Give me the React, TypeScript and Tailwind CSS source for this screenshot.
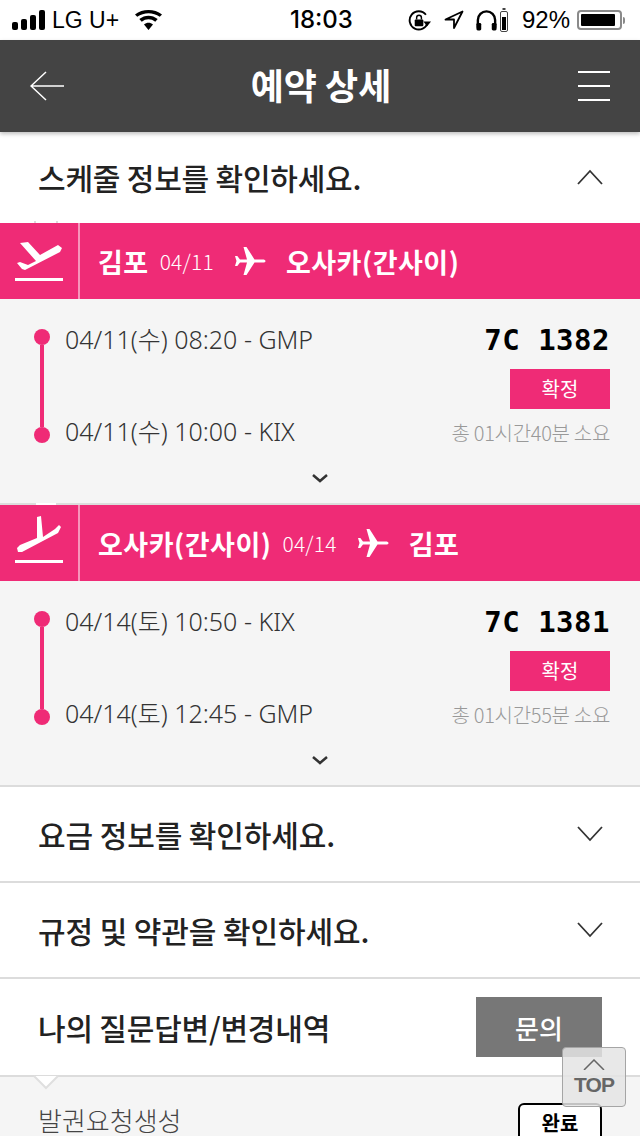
const KR = { fontFamily: '"Noto Sans CJK KR", "Noto Sans", sans-serif' };
const LATIN = { fontFamily: '"Noto Sans", "Noto Sans CJK KR", sans-serif' };

function Plane({ className }: { className?: string }) {
	return (
		<svg viewBox="0 0 32 30" className={className} fill="currentColor">
			<path d="M31.500 15c0-.9-1-1.600-3-1.600h-8L12.500 1H9.500l3.500 12.400H6L3.300 10H1l1.500 5L1 20h2.300L6 16.600h7L9.500 29h3l8-12.400h8c2 0 3-.7 3-1.600z" />
		</svg>
	);
}

function Departure() {
	return (
		<svg viewBox="0 0 50 42" className="h-[42px] w-[50px] text-white" fill="currentColor">
			<path d="M5 3L13 2 25 15 43 5 47 8 45 12 10 30 7 29 2 23 5 22 13 25 21 21z" strokeLinejoin="round" />
			<rect x="0" y="38" width="48" height="3" />
		</svg>
	);
}

function Arrival() {
	return (
		<svg viewBox="0 0 50 54" className="h-[54px] w-[50px] text-white" fill="currentColor">
			<path d="M22 1L26 0 28 21 40 13 44 9 46 11 43 17 7 36 3 36 2 32 5 29 22 22z" />
			<rect x="0" y="44" width="48" height="3" />
		</svg>
	);
}

function Chevron({ up }: { up?: boolean }) {
	return (
		<svg viewBox="0 0 26 16" className="h-[16px] w-[26px]" fill="none" stroke="#333" strokeWidth="1.800">
			<path d={up ? "M1 15L13 2l12 13" : "M1 1l12 13L25 1"} />
		</svg>
	);
}

function SectionRow({ title }: { title: string }) {
	return (
		<div className="flex h-[96px] items-center justify-between border-b-2 border-[#dcdcdc] bg-white pr-[37px] pl-[38px]">
			<h2 className="text-[30px] leading-none font-medium tracking-[-0.1px] text-[#222]">{title}</h2>
			<Chevron />
		</div>
	);
}

type Flight = {
	icon: React.ReactNode;
	from: string;
	to: string;
	date: string;
	dep: string;
	arr: string;
	no: string;
	total: string;
};

function FlightCard({ flight }: { flight: Flight }) {
	return (
		<section>
			<div className="flex h-[76px] items-center bg-[#ef2b76] text-white">
				<div className="flex h-full w-[80px] items-center border-r-2 border-[#f795bb] pl-[15px]">
					{flight.icon}
				</div>
				<div className="flex items-center pl-[18px]">
					<span className="text-[27px] leading-none font-bold tracking-[0.5px]">{flight.from}</span>
					<span className="ml-[11px] text-[21px] leading-none font-light tracking-[0.2px]">{flight.date}</span>
					<Plane className="mx-[20px] h-[30px] w-[32px]" />
					<span className="text-[27px] leading-none font-bold tracking-[0.5px]">{flight.to}</span>
				</div>
			</div>
			<div className="relative flex h-[204px] justify-between bg-[#f5f5f5] pt-[26px] pr-[30px] pl-[34px]">
				<div className="flex">
					<div className="flex h-[114px] w-[16px] flex-col items-center pt-[4px]">
						<span className="h-[16px] w-[16px] shrink-0 rounded-full bg-[#ef2b76]" />
						<span className="h-[82px] w-[4px] shrink-0 bg-[#ef2b76]" />
						<span className="h-[16px] w-[16px] shrink-0 rounded-full bg-[#ef2b76]" />
					</div>
					<div className="ml-[15px] flex h-[120px] flex-col justify-between text-[25px] leading-[28px] font-light text-[#333]" style={LATIN}>
						<p>{flight.dep}</p>
						<p>{flight.arr}</p>
					</div>
				</div>
				<div className="flex flex-col items-end">
					<p className="font-['DejaVu_Sans_Mono',monospace] text-[29px] leading-[30px] font-bold tracking-[0.5px] text-black">
						{flight.no}
					</p>
					<span className="mt-[14px] flex h-[40px] w-[100px] items-center justify-center bg-[#ef2b76] text-[20px] text-white">
						확정
					</span>
					<p className="mt-[11px] text-[20px] leading-[26px] font-light tracking-[-0.3px] text-[#999]">{flight.total}</p>
				</div>
				<svg viewBox="0 0 16 9" className="absolute top-[175px] left-[312px] h-[9px] w-[16px]" fill="none" stroke="#333" strokeWidth="2.500">
					<path d="M1 1l7 6 7-6" />
				</svg>
			</div>
			<div className="h-[2px] bg-[#dcdcdc]" />
		</section>
	);
}

const flights: Flight[] = [
	{
		icon: <Departure />,
		from: "김포",
		to: "오사카(간사이)",
		date: "04/11",
		dep: "04/11(수) 08:20 - GMP",
		arr: "04/11(수) 10:00 - KIX",
		no: "7C 1382",
		total: "총 01시간40분 소요",
	},
	{
		icon: <Arrival />,
		from: "오사카(간사이)",
		to: "김포",
		date: "04/14",
		dep: "04/14(토) 10:50 - KIX",
		arr: "04/14(토) 12:45 - GMP",
		no: "7C 1381",
		total: "총 01시간55분 소요",
	},
];

export default function App() {
	return (
		<div className="relative h-[1136px] w-[640px] overflow-hidden bg-white" style={KR}>
			<div className="flex h-[40px] items-center justify-between pr-[15px] pl-[12px] text-[24px] font-normal text-black">
				<div className="flex items-center">
					<div className="flex items-end gap-[3px]">
						<span className="h-[8px] w-[6px] rounded-[2px] bg-black" />
						<span className="h-[11px] w-[6px] rounded-[2px] bg-black" />
						<span className="h-[15px] w-[6px] rounded-[2px] bg-black" />
						<span className="h-[20px] w-[6px] rounded-[2px] bg-black" />
					</div>
					<span className="ml-[7px] font-['Liberation_Sans',sans-serif] text-[23px]">LG U+</span>
					<svg viewBox="0 0 30 22" className="ml-[16px] h-[20px] w-[27px]" fill="black">
						<path d="M15 22l-5-6c3-2.500 7-2.500 10 0zM7.500 13L4.800 10c6-5 14.400-5 20.400 0l-2.700 3c-4.500-3.700-10.500-3.700-15 0zM2.500 7.500L0 4.800c8.500-6.400 21.500-6.400 30 0l-2.500 2.700C20 2 10 2 2.500 7.500z" />
					</svg>
				</div>
				<span className="absolute left-[290px] font-['Inter',sans-serif] text-[24px] font-medium">18:03</span>
				<div className="flex items-center">
					<svg viewBox="0 0 24 24" className="h-[23px] w-[23px]" fill="none" stroke="black" strokeWidth="2">
						<path d="M20.500 14a9.500 9.500 0 1 1-1.800-8" />
						<path d="M16 13h8l-4 5z" fill="black" stroke="none" />
						<rect x="7" y="11" width="9" height="7" rx="1" fill="black" stroke="none" />
						<path d="M9 11V9a2.500 2.500 0 0 1 5 0v2" strokeWidth="1.500" />
					</svg>
					<svg viewBox="0 0 20 20" className="ml-[13px] h-[20px] w-[20px]" fill="none" stroke="black" strokeWidth="1.800">
						<path d="M18.500 1.500L1.500 9.500h8.500v8.500z" strokeLinejoin="round" />
					</svg>
					<svg viewBox="0 0 24 24" className="ml-[11px] h-[24px] w-[23px]" fill="none" stroke="black" strokeWidth="2.500">
						<path d="M3 20v-8a9 9 0 0 1 18 0v8" />
						<rect x="1.500" y="15" width="5" height="8" rx="1.500" fill="black" stroke="none" />
						<rect x="17.500" y="15" width="5" height="8" rx="1.500" fill="black" stroke="none" />
					</svg>
					<svg viewBox="0 0 8 24" className="ml-[2px] h-[24px] w-[8px]">
						<rect x="2.500" y="0" width="3" height="2" fill="#444" />
						<rect x="0.500" y="3.500" width="7" height="20" rx="1.500" fill="none" stroke="#444" />
						<rect x="2" y="9" width="4" height="13" fill="black" />
					</svg>
					<span className="ml-[14px] font-['Liberation_Sans',sans-serif] text-[24px]">92%</span>
					<div className="ml-[7px] flex items-center">
						<div className="h-[20px] w-[45px] rounded-[4px] border-2 border-[#8a8a8a] p-[2px]">
							<div className="h-full w-[92%] rounded-[1px] bg-black" />
						</div>
						<span className="ml-[1px] h-[7px] w-[2px] rounded-r-full bg-[#8a8a8a]" />
					</div>
				</div>
			</div>

			<header className="relative z-10 flex h-[92px] items-center justify-between bg-[#444444] pr-[30px] pl-[30px] shadow-[0_2px_4px_rgba(0,0,0,0.25)]">
				<svg viewBox="0 0 34 30" className="h-[30px] w-[34px]" fill="none" stroke="white" strokeWidth="1.500">
					<path d="M16 1L1 15l15 14M1 15h33" />
				</svg>
				<h1 className="mb-[4px] text-[36px] leading-none font-bold text-white">예약 상세</h1>
				<div className="flex h-[30px] w-[32px] flex-col justify-between">
					<span className="h-[2px] bg-white" />
					<span className="h-[2px] bg-white" />
					<span className="h-[2px] bg-white" />
				</div>
			</header>

			<div className="relative flex h-[91px] items-center justify-between bg-white pr-[37px] pb-[2px] pl-[38px]">
				<h2 className="text-[30px] leading-none font-medium tracking-[-0.2px] text-[#222]">스케줄 정보를 확인하세요.</h2>
				<Chevron up />
				<span className="absolute bottom-0 left-[34px] h-[2px] w-[2px] bg-[#dcdcdc]" />
				<span className="absolute bottom-0 left-[56px] h-[2px] w-[2px] bg-[#dcdcdc]" />
			</div>

			<div className="relative">
				<FlightCard flight={flights[0]} />
				<span className="absolute top-[280px] left-[36px] h-[2px] w-[20px] bg-white" />
				<FlightCard flight={flights[1]} />
			</div>

			<SectionRow title="요금 정보를 확인하세요." />
			<SectionRow title="규정 및 약관을 확인하세요." />

			<div className="flex h-[98px] items-center justify-between border-b-2 border-[#dcdcdc] bg-white pr-[38px] pl-[38px]">
				<h2 className="text-[30px] leading-none font-medium tracking-[-0.2px] text-[#222]">나의 질문답변/변경내역</h2>
				<button className="flex h-[60px] w-[126px] items-center justify-center bg-[#777777] text-[26px] font-medium text-white">
					문의
				</button>
			</div>

			<div className="relative flex items-start justify-between bg-[#f5f5f5] pt-[26px] pr-[38px] pl-[38px]">
				<svg viewBox="0 0 26 15" className="absolute top-[-2px] left-[33px] h-[15px] w-[26px]" fill="white" stroke="#dfdfdf" strokeWidth="2">
					<path d="M1 1l12 12L25 1" />
				</svg>
				<p className="mt-[-1px] text-[26px] leading-[36px] font-light text-[#444]">발권요청생성</p>
				<span className="flex h-[40px] w-[84px] items-center justify-center rounded-[6px] border-2 border-black bg-white text-[20px] font-bold text-black">
					완료
				</span>
			</div>

			<div className="absolute top-[1047px] left-[562px] flex h-[60px] w-[64px] flex-col items-center rounded-[4px] border border-[#a5a5a5] bg-[#e4e4e4]/85 pt-[11px]">
				<svg viewBox="0 0 22 11" className="h-[11px] w-[22px]" fill="none" stroke="#666" strokeWidth="1.500">
					<path d="M1 11L11 1l10 10" />
				</svg>
				<span className="mt-[3px] font-['Liberation_Sans',sans-serif] text-[21px] leading-[24px] font-bold tracking-[-1px] text-[#666]">TOP</span>
			</div>
		</div>
	);
}
